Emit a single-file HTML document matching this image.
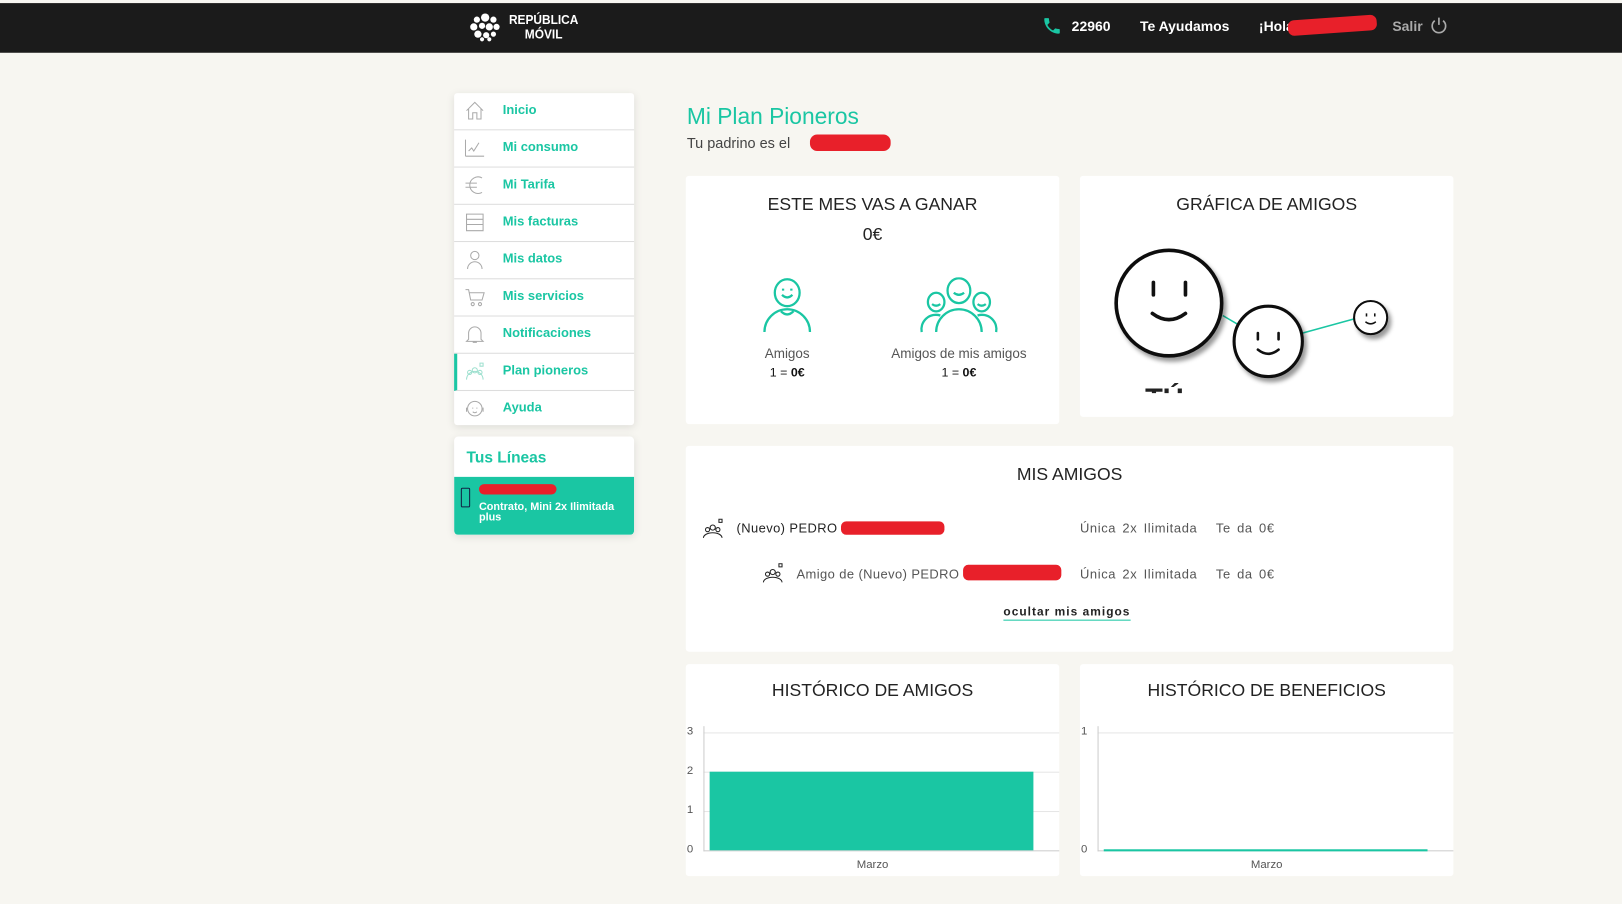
<!DOCTYPE html>
<html><head><meta charset="utf-8"><style>
html,body{margin:0;padding:0;width:1622px;height:904px;overflow:hidden;background:#f7f6f1;font-family:"Liberation Sans",sans-serif}
#w{position:absolute;left:0;top:0;width:1568px;height:874px;transform:scale(1.03444);transform-origin:0 0;background:#f7f6f1}
.a{position:absolute}
.top{left:0;top:3px;width:1568px;height:48px;background:#1b1b1b}
.card{background:#fff;border-radius:3px}
.side{left:439px;top:90px;width:174px;height:321px;background:#fff;border-radius:3px;box-shadow:0 2px 8px rgba(0,0,0,.1)}
.it{position:absolute;left:0;width:174px;height:35px;border-bottom:1px solid #ddd;color:#1ac6a3;font-weight:bold;font-size:12.5px;line-height:33px}
.it span{position:absolute;left:47px}
.it svg{position:absolute;left:10px;top:7px}
.h{font-size:17px;color:#222;text-align:center;position:absolute;width:100%}
.g{color:#555}
</style></head><body><div id="w">
<div class="a top"></div>
<svg class="a" style="left:453px;top:11px" width="32" height="30" viewBox="0 0 32 30" fill="#fff">
<circle cx="16" cy="6" r="4"/><circle cx="8" cy="8" r="3"/><circle cx="24" cy="8" r="3"/><circle cx="5" cy="15" r="3.5"/><circle cx="13" cy="14" r="3"/><circle cx="20" cy="15" r="3.5"/><circle cx="27" cy="15" r="3"/><circle cx="9" cy="22" r="3.5"/><circle cx="17" cy="23" r="3"/><circle cx="24" cy="22" r="2.5"/><circle cx="13" cy="27" r="2"/><circle cx="20" cy="27" r="2"/></svg>
<div class="a" style="left:492px;top:12px;color:#fff;font-weight:bold;font-size:12.5px;line-height:14px;text-align:center;letter-spacing:0;transform:scaleX(.92);transform-origin:0 0">REPÚBLICA<br>MÓVIL</div>
<svg class="a" style="left:1007px;top:15px" width="20" height="20" viewBox="0 0 24 24"><path fill="#1ac6a3" d="M6.6 10.8c1.4 2.8 3.8 5.1 6.6 6.6l2.2-2.2c.3-.3.7-.4 1-.2 1.1.4 2.3.6 3.6.6.6 0 1 .4 1 1V20c0 .6-.4 1-1 1C10.6 21 3 13.4 3 4c0-.6.4-1 1-1h3.5c.6 0 1 .4 1 1 0 1.3.2 2.5.6 3.6.1.3 0 .7-.2 1z"/></svg>
<div class="a" style="left:1036px;top:18px;color:#fff;font-weight:bold;font-size:13.5px">22960</div>
<div class="a" style="left:1102px;top:18px;color:#fff;font-weight:bold;font-size:13.5px">Te Ayudamos</div>
<div class="a" style="left:1217px;top:18px;color:#fff;font-weight:bold;font-size:13.5px">¡Hola</div>
<div class="a" style="left:1245px;top:17px;width:86px;height:15px;background:#e8202a;border-radius:6px;transform:rotate(-4deg)"></div>
<div class="a" style="left:1346px;top:18px;color:#aaa;font-weight:bold;font-size:13.5px">Salir</div>
<svg class="a" style="left:1382px;top:16px" width="18" height="18" viewBox="0 0 18 18" fill="none" stroke="#aaa" stroke-width="1.6"><path d="M5 4a6.5 6.5 0 1 0 8 0"/><path d="M9 1v7"/></svg>

<div class="a side">
<div class="it" style="top:0"><svg width="20" height="20" viewBox="0 0 20 20" fill="none" stroke="#aaa"><path d="M2 10L10 2l8 8M4 8v10h4v-6h4v6h4V8"/></svg><span>Inicio</span></div>
<div class="it" style="top:36px"><svg width="20" height="20" viewBox="0 0 20 20" fill="none" stroke="#aaa"><path d="M1 18h18M1 2v16M4 13l3-3 2 3 5-8"/></svg><span>Mi consumo</span></div>
<div class="it" style="top:72px"><svg width="20" height="20" viewBox="0 0 20 20" fill="none" stroke="#aaa"><path d="M17 3a8 8 0 1 0 0 14M1 8h11M1 12h11"/></svg><span>Mi Tarifa</span></div>
<div class="it" style="top:108px"><svg width="20" height="20" viewBox="0 0 20 20" fill="none" stroke="#aaa"><path d="M2 2h16v5H2zM2 7h16v5H2zM2 12h16v6H2z"/></svg><span>Mis facturas</span></div>
<div class="it" style="top:144px"><svg width="20" height="20" viewBox="0 0 20 20" fill="none" stroke="#aaa"><circle cx="10" cy="6" r="4"/><path d="M3 19a7 7 0 0 1 14 0"/></svg><span>Mis datos</span></div>
<div class="it" style="top:180px"><svg width="20" height="20" viewBox="0 0 20 20" fill="none" stroke="#aaa"><path d="M1 3h3l2 10h11l2-7H5"/><circle cx="8" cy="17" r="1.5"/><circle cx="15" cy="17" r="1.5"/></svg><span>Mis servicios</span></div>
<div class="it" style="top:216px"><svg width="20" height="20" viewBox="0 0 20 20" fill="none" stroke="#aaa"><path d="M4 15V9a6 6 0 0 1 12 0v6l2 2H2zM8 18h4"/></svg><span>Notificaciones</span></div>
<div class="it" style="top:252px;border-left:3px solid #1ac6a3;width:171px"><svg width="20" height="20" viewBox="0 0 20 20" fill="none" stroke="#9ee0cf" style="left:7px"><circle cx="10" cy="9" r="2.5"/><circle cx="5" cy="11" r="2"/><circle cx="15" cy="11" r="2"/><path d="M2 18a4 4 0 0 1 16 0M15 2h3v3h-3z"/></svg><span style="left:44px">Plan pioneros</span></div>
<div class="it" style="top:288px;border-bottom:0"><svg width="20" height="20" viewBox="0 0 20 20" fill="none" stroke="#aaa"><circle cx="10" cy="10" r="7"/><path d="M2 9v4M18 9v4M8 9v1M12 9v1M8 13q2 2 4 0"/></svg><span>Ayuda</span></div>
</div>

<div class="a" style="left:439px;top:422px;width:174px;height:95px;background:#fff;border-radius:4px;box-shadow:0 2px 8px rgba(0,0,0,.1);overflow:hidden">
<div class="a" style="left:12px;top:12px;color:#1ac6a3;font-weight:bold;font-size:15px">Tus Líneas</div>
<div class="a" style="left:0;top:39px;width:174px;height:56px;background:#1ac6a3"></div>
<div class="a" style="left:24px;top:46px;width:75px;height:10px;background:#e8202a;border-radius:5px"></div>
<svg class="a" style="left:6px;top:49px" width="10" height="20" viewBox="0 0 10 20" fill="none" stroke="#124"><rect x="1" y="1" width="8" height="18" rx="1"/></svg>
<div class="a" style="left:24px;top:63px;color:#fff;font-weight:bold;font-size:10.5px;line-height:10px">Contrato, Mini 2x Ilimitada<br>plus</div>
</div>

<div class="a" style="left:664px;top:100px;color:#1ac6a3;font-size:22px">Mi Plan Pioneros</div>
<div class="a" style="left:664px;top:130px;color:#444;font-size:14px">Tu padrino es el</div>
<div class="a" style="left:783px;top:130px;width:78px;height:16px;background:#e8202a;border-radius:7px"></div>

<div class="a card" style="left:663px;top:170px;width:361px;height:240px">
<div class="h" style="top:18px">ESTE MES VAS A GANAR</div>
<div class="h" style="top:47px">0€</div>
<svg class="a" style="left:74px;top:98px" width="48" height="54" viewBox="0 0 48 54" fill="none" stroke="#1ac6a3" stroke-width="2.2"><ellipse cx="24" cy="15" rx="12" ry="13"/><path d="M19 17q5 5 10 0M20 11v2M28 11v2M2 53a22 22 0 0 1 44 0M18 33q6 6 12 0"/></svg>
<svg class="a" style="left:226px;top:98px" width="76" height="54" viewBox="0 0 76 54" fill="none" stroke="#1ac6a3" stroke-width="2.2"><ellipse cx="38" cy="13" rx="11" ry="12"/><ellipse cx="16" cy="24" rx="8" ry="9"/><ellipse cx="60" cy="24" rx="8" ry="9"/><path d="M33 15q5 4 10 0M12 26q4 3 8 0M56 26q4 3 8 0M16 53a22 22 0 0 1 44 0M2 53a14 14 0 0 1 18-16M74 53a14 14 0 0 0-18-16"/></svg>
<div class="a g" style="left:0;width:196px;text-align:center;top:164px;font-size:13px">Amigos</div>
<div class="a" style="left:0;width:196px;text-align:center;top:183px;font-size:12px;color:#111">1 = <b>0€</b></div>
<div class="a g" style="left:186px;width:156px;text-align:center;top:164px;font-size:13px">Amigos de mis amigos</div>
<div class="a" style="left:186px;width:156px;text-align:center;top:183px;font-size:12px;color:#111">1 = <b>0€</b></div>
</div>

<div class="a card" style="left:1044px;top:170px;width:361px;height:233px;overflow:hidden">
<div class="h" style="top:18px">GRÁFICA DE AMIGOS</div>
<svg class="a" style="left:0;top:60px" width="361" height="150" viewBox="0 0 361 150"><defs><filter id="s"><feDropShadow dx="3" dy="4" stdDeviation="2" flood-opacity=".4"/></filter></defs>
<path d="M138 75L155 85M215 92L266 78" stroke="#1ac6a3" stroke-width="1.5"/>
<g filter="url(#s)" fill="#fff" stroke="#111" stroke-width="3.5"><ellipse cx="86" cy="63" rx="51" ry="51"/><ellipse cx="182" cy="100" rx="33" ry="34" stroke-width="3"/><ellipse cx="281" cy="77" rx="16" ry="16" stroke-width="2"/></g>
<path d="M71 43v12M102 43v12M70 73q16 12 32 0" stroke="#111" stroke-width="3.5" fill="none" stroke-linecap="round"/>
<path d="M172 92v6M192 92v6M172 108q10 8 20 0" stroke="#111" stroke-width="2.5" fill="none" stroke-linecap="round"/>
<path d="M277 73v3M285 73v3M276 81q5 4 10 0" stroke="#111" stroke-width="1.5" fill="none"/>
<text x="63" y="165" font-size="28" font-weight="bold" fill="#222" font-family="Liberation Sans">TÚ</text></svg>
</div>

<div class="a card" style="left:663px;top:431px;width:742px;height:199px">
<div class="h" style="top:18px">MIS AMIGOS</div>
<svg class="a" style="left:16px;top:70px" width="22" height="20" viewBox="0 0 22 20" fill="none" stroke="#222"><circle cx="10" cy="9" r="2.5"/><circle cx="5" cy="11" r="2"/><circle cx="15" cy="11" r="2"/><path d="M1 19a9 5 0 0 1 18 0M16 1h3v3h-3z"/></svg>
<div class="a" style="left:49px;top:73px;font-size:12.5px;color:#222;letter-spacing:.4px">(Nuevo) PEDRO</div>
<div class="a" style="left:150px;top:73px;width:100px;height:13px;background:#e8202a;border-radius:5px"></div>
<svg class="a" style="left:74px;top:113px" width="22" height="20" viewBox="0 0 22 20" fill="none" stroke="#222"><circle cx="10" cy="9" r="2.5"/><circle cx="5" cy="11" r="2"/><circle cx="15" cy="11" r="2"/><path d="M1 19a9 5 0 0 1 18 0M16 1h3v3h-3z"/></svg>
<div class="a" style="left:107px;top:117px;font-size:12.5px;color:#555;letter-spacing:.4px">Amigo de (Nuevo) PEDRO</div>
<div class="a" style="left:268px;top:115px;width:95px;height:15px;background:#e8202a;border-radius:5px"></div>
<div class="a g" style="left:381px;top:73px;font-size:12.5px;letter-spacing:.6px;word-spacing:2px">Única 2x Ilimitada &nbsp; Te da 0€</div>
<div class="a g" style="left:381px;top:117px;font-size:12.5px;letter-spacing:.6px;word-spacing:2px">Única 2x Ilimitada &nbsp; Te da 0€</div>
<div class="a" style="left:307px;top:155px;font-size:11.5px;font-weight:bold;color:#222;border-bottom:1.5px solid #1ac6a3;padding-bottom:1px;letter-spacing:1px">ocultar mis amigos</div>
</div>

<div class="a card" style="left:663px;top:642px;width:361px;height:205px">
<div class="h" style="top:16px">HISTÓRICO DE AMIGOS</div>
<div class="a" style="left:17px;top:66px;width:344px;height:1px;background:#e6e6e6"></div>
<div class="a" style="left:17px;top:104px;width:344px;height:1px;background:#e6e6e6"></div>
<div class="a" style="left:17px;top:142px;width:344px;height:1px;background:#e6e6e6"></div>
<div class="a" style="left:17px;top:180px;width:344px;height:1px;background:#ccc"></div>
<div class="a" style="left:17px;top:60px;width:1px;height:121px;background:#ccc"></div>
<div class="a" style="left:1px;top:59px;font-size:11px;color:#555">3</div>
<div class="a" style="left:1px;top:97px;font-size:11px;color:#555">2</div>
<div class="a" style="left:1px;top:135px;font-size:11px;color:#555">1</div>
<div class="a" style="left:1px;top:173px;font-size:11px;color:#555">0</div>
<div class="a" style="left:23px;top:104px;width:313px;height:76px;background:#1ac6a3"></div>
<div class="a g" style="left:0;width:361px;text-align:center;top:188px;font-size:11px">Marzo</div>
</div>

<div class="a card" style="left:1044px;top:642px;width:361px;height:205px">
<div class="h" style="top:16px">HISTÓRICO DE BENEFICIOS</div>
<div class="a" style="left:17px;top:66px;width:344px;height:1px;background:#e6e6e6"></div>
<div class="a" style="left:17px;top:180px;width:344px;height:1px;background:#ccc"></div>
<div class="a" style="left:17px;top:60px;width:1px;height:121px;background:#ccc"></div>
<div class="a" style="left:1px;top:59px;font-size:11px;color:#555">1</div>
<div class="a" style="left:1px;top:173px;font-size:11px;color:#555">0</div>
<div class="a" style="left:23px;top:179px;width:313px;height:2px;background:#1ac6a3"></div>
<div class="a g" style="left:0;width:361px;text-align:center;top:188px;font-size:11px">Marzo</div>
</div>
</div></body></html>
